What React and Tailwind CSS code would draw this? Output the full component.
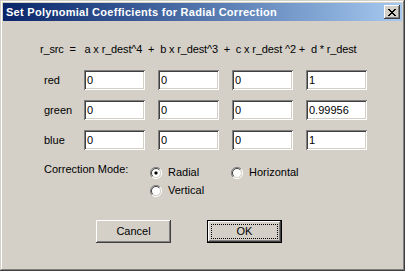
import { useState } from "react";

const rows = [
    { name: "red", values: ["0", "0", "0", "1"] },
    { name: "green", values: ["0", "0", "0", "0.99956"] },
    { name: "blue", values: ["0", "0", "0", "1"] },
];

const Radio = ({ checked, label, onClick }) => (
    <button type="button" onClick={onClick} className="flex items-center gap-[6px] h-[13px] outline-none">
        <svg width="12" height="12" viewBox="0 0 12 12" className="shrink-0">
            {/* outer ring: dark top-left, light bottom-right */}
            <path d="M10 2 A5.5 5.5 0 0 0 2 10" fill="none" stroke="#808080" strokeWidth="1" />
            <path d="M2 10 A5.5 5.5 0 0 0 10 2" fill="none" stroke="#ffffff" strokeWidth="1" />
            <circle cx="6" cy="6" r="4.5" fill="#ffffff" />
            <path d="M9.2 2.8 A4.5 4.5 0 0 0 2.8 9.2" fill="none" stroke="#404040" strokeWidth="1" />
            <path d="M2.8 9.2 A4.5 4.5 0 0 0 9.2 2.8" fill="none" stroke="#d4d0c8" strokeWidth="1" />
            {checked && <rect x="4.5" y="4.5" width="3" height="3" rx="1" fill="#000000" />}
        </svg>
        <span>{label}</span>
    </button>
);

const App = () => {
    const [mode, setMode] = useState("radial");
    const [coeffs, setCoeffs] = useState(rows);

    const updateValue = (r, c, v) => {
        setCoeffs((prev) =>
            prev.map((row, i) =>
                i === r ? { ...row, values: row.values.map((x, j) => (j === c ? v : x)) } : row
            )
        );
    };

    return (
        <div
            className="w-[405px] h-[271px] bg-[#d4d0c8] p-[3px] flex flex-col text-[11px] text-black shadow-[inset_-1px_-1px_#404040,inset_1px_1px_#d4d0c8,inset_-2px_-2px_#808080,inset_2px_2px_#ffffff]"
            style={{ fontFamily: '"Liberation Sans", Arial, sans-serif' }}
        >
            {/* Title bar */}
            <div className="h-[18px] flex items-center justify-between bg-gradient-to-r from-[#0a246a] to-[#a6caf0] pl-[3px] pr-[2px]">
                <span className="text-white font-bold text-[11px] leading-none tracking-[0.28px]">
                    Set Polynomial Coefficients for Radial Correction
                </span>
                <button
                    type="button"
                    className="w-[16px] h-[14px] bg-[#d4d0c8] flex items-center justify-center shadow-[inset_-1px_-1px_#404040,inset_1px_1px_#ffffff,inset_-2px_-2px_#808080,inset_2px_2px_#d4d0c8]"
                >
                    <svg width="8" height="7" viewBox="0 0 8 7">
                        <path d="M0 0h2v1h1v1h2V1h1V0h2v1H7v1H6v1H5v1h1v1h1v1h1v1H6V6H5V5H3v1H2v1H0V6h1V5h1V4h1V3H2V2H1V1H0z" fill="#000" />
                    </svg>
                </button>
            </div>

            {/* Body */}
            <div className="flex flex-col pl-[41px]">
                <div className="mt-[22px] whitespace-pre leading-[13px] -ml-[4px] tracking-[-0.15px]">
                    {"r_src  =   a x r_dest^4  +  b x r_dest^3  +  c x r_dest ^2 +  d * r_dest"}
                </div>

                <div className="mt-[14px] flex flex-col gap-[10px]">
                    {coeffs.map((row, r) => (
                        <div key={row.name} className="flex items-center">
                            <span className="w-[40px]">{row.name}</span>
                            <div className="flex gap-[13px]">
                                {row.values.map((v, c) => (
                                    <input
                                        key={c}
                                        value={v}
                                        onChange={(e) => updateValue(r, c, e.target.value)}
                                        className="w-[61px] h-[20px] bg-white px-[3px] text-[11px] outline-none shadow-[inset_1px_1px_#808080,inset_-1px_-1px_#ffffff,inset_2px_2px_#404040,inset_-2px_-2px_#d4d0c8]"
                                    />
                                ))}
                            </div>
                        </div>
                    ))}
                </div>

                <div className="mt-[13px] flex">
                    <span className="w-[106px] leading-[13px]">Correction Mode:</span>
                    <div className="grid grid-cols-[81px_auto] gap-y-[5px] mt-[3px]">
                        <Radio checked={mode === "radial"} label="Radial" onClick={() => setMode("radial")} />
                        <Radio checked={mode === "horizontal"} label="Horizontal" onClick={() => setMode("horizontal")} />
                        <Radio checked={mode === "vertical"} label="Vertical" onClick={() => setMode("vertical")} />
                    </div>
                </div>

                <div className="mt-[23px] flex gap-[36px] pl-[52px]">
                    <button
                        type="button"
                        className="w-[75px] h-[23px] bg-[#d4d0c8] shadow-[inset_-1px_-1px_#404040,inset_1px_1px_#ffffff,inset_-2px_-2px_#808080,inset_2px_2px_#d4d0c8]"
                    >
                        Cancel
                    </button>
                    <button
                        type="button"
                        className="w-[75px] h-[23px] bg-[#d4d0c8] border border-black p-[3px] shadow-[inset_-1px_-1px_#404040,inset_1px_1px_#ffffff,inset_-2px_-2px_#808080,inset_2px_2px_#d4d0c8]"
                    >
                        <span className="flex w-full h-full items-center justify-center border border-dotted border-black">
                            OK
                        </span>
                    </button>
                </div>
            </div>
        </div>
    );
};

export default App;
